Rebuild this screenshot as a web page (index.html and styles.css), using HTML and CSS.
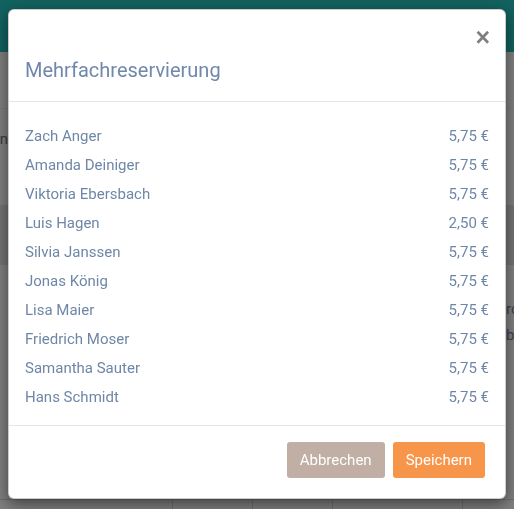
FILE: index.html
```html
<!doctype html>
<html>
<head>
<meta charset="utf-8">
<title>Mehrfachreservierung</title>
<link rel="stylesheet" href="styles.css">
</head>
<body>
<div class="page">
	<div class="topbar"></div>
	<div class="toolbar"></div>
	<div class="main">
		<div class="sec sec-a">
			<div class="side side-left"><span>Ansicht Woche n</span></div>
			<div></div>
			<div class="side"></div>
		</div>
		<div class="sec sec-b"></div>
		<div class="sec sec-c">
			<div class="side"></div>
			<div></div>
			<div class="side side-right">
				<div>rot</div>
				<div>buchen</div>
			</div>
		</div>
	</div>
	<div class="tablerow">
		<div></div><div></div><div></div><div></div><div></div>
	</div>
</div>

<div class="backdrop"></div>

<div class="modal">
	<div class="modal-header">
		<button class="close" type="button">&times;</button>
		<h4 class="modal-title">Mehrfachreservierung</h4>
	</div>
	<div class="modal-body">
		<ul class="list">
			<li><span>Zach Anger</span><span>5,75 €</span></li>
			<li><span>Amanda Deiniger</span><span>5,75 €</span></li>
			<li><span>Viktoria Ebersbach</span><span>5,75 €</span></li>
			<li><span>Luis Hagen</span><span>2,50 €</span></li>
			<li><span>Silvia Janssen</span><span>5,75 €</span></li>
			<li><span>Jonas König</span><span>5,75 €</span></li>
			<li><span>Lisa Maier</span><span>5,75 €</span></li>
			<li><span>Friedrich Moser</span><span>5,75 €</span></li>
			<li><span>Samantha Sauter</span><span>5,75 €</span></li>
			<li><span>Hans Schmidt</span><span>5,75 €</span></li>
		</ul>
	</div>
	<div class="modal-footer">
		<button class="btn btn-cancel" type="button">Abbrechen</button>
		<button class="btn btn-save" type="button">Speichern</button>
	</div>
</div>
</body>
</html>
```

FILE: styles.css
```css
*{box-sizing:border-box;}
html,body{margin:0;padding:0;overflow:hidden;}
body{font-family:Roboto,"Liberation Sans",sans-serif;background:#fff;color:#6f88a8;height:509px;}

/* page behind the dialog */
.page{height:509px;display:flex;flex-direction:column;}
.topbar{height:52px;background:#24c4be;flex:none;}
.toolbar{height:57px;border-bottom:1px solid #f4f4f4;flex:none;}
.main{height:390px;display:flex;flex-direction:column;flex:none;}
.sec{display:grid;grid-template-columns:8px 1fr 8px;}
.sec-a{height:96px;}
.sec-b{height:60px;background:#e6e6e6;}
.sec-c{flex:1;}
.side{overflow:hidden;white-space:nowrap;font-size:15px;}
.side-left{display:flex;justify-content:flex-end;padding-top:20px;line-height:20px;color:#777;}
.side-right{padding-top:31px;line-height:26px;color:#6f88a8;}
.tablerow{flex:1;display:grid;grid-template-columns:172px 80px 80px 130px 1fr;border-top:1px solid #dcdcdc;}
.tablerow div+div{border-left:1px solid #dcdcdc;}

.backdrop{position:fixed;left:0;top:0;right:0;bottom:0;background:rgba(0,0,0,.5);}

/* dialog */
.modal{position:fixed;left:8px;top:9px;width:498px;background:#fff;border:1px solid rgba(0,0,0,.2);border-radius:6px;box-shadow:0 5px 15px rgba(0,0,0,.5);}
.modal-header{padding:15px 16px 17px;border-bottom:1px solid #e5e5e5;display:flex;flex-direction:column;}
.close{align-self:flex-end;background:none;border:0;padding:0;margin:2px -1px 0 0;font-family:"Liberation Sans",Arial,sans-serif;font-size:25px;font-weight:bold;line-height:21px;height:21px;color:#000;opacity:.5;cursor:pointer;}
.modal-title{margin:8px 0 0;font-size:20px;font-weight:400;line-height:28px;color:#6f88ab;}
.modal-body{padding:19px 16px 14px;}
.list{margin:0;padding:0;list-style:none;}
.list li{display:flex;justify-content:space-between;font-size:15px;line-height:30px;height:29px;color:#6f87a6;}
.modal-footer{border-top:1px solid #e5e5e5;padding:16px 20px 20px;display:flex;justify-content:flex-end;gap:8px;}
.btn{height:36px;padding:0 13px;border:0;border-radius:3px;font-family:Roboto,"Liberation Sans",sans-serif;font-size:15px;color:#fff;cursor:pointer;}
.btn-cancel{background:#c1aea4;}
.btn-save{background:#f7954a;}
```
